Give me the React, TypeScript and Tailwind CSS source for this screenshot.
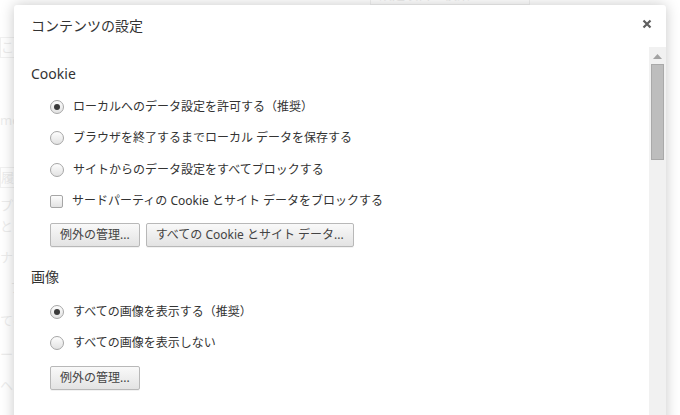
import React from "react";

const font = { fontFamily: '"Noto Sans", "Noto Sans CJK JP", sans-serif' };

const Radio = ({ checked }: { checked?: boolean }) => (
  <span className="flex h-[14px] w-[14px] shrink-0 items-center justify-center rounded-full border border-[#a6a6a6] bg-gradient-to-b from-[#fdfdfd] to-[#e2e2e2]">
    {checked && <span className="h-[6px] w-[6px] rounded-full bg-[#3a3a3a]" />}
  </span>
);

const Checkbox = () => (
  <span className="h-[13px] w-[13px] shrink-0 rounded-[2px] border border-[#a6a6a6] bg-gradient-to-b from-[#fdfdfd] to-[#e2e2e2]" />
);

const Option = ({ children, control }: { children: React.ReactNode; control: React.ReactNode }) => (
  <div className="flex h-[31.5px] items-center gap-[9px] text-[12px] text-[#333]">
    {control}
    <span className="leading-none">{children}</span>
  </div>
);

const Btn = ({ children }: { children: React.ReactNode }) => (
  <button className="h-[24px] rounded-[2px] border border-[#b8b8b8] bg-gradient-to-b from-[#f9f9f9] to-[#e3e3e3] px-[9px] text-[12px] leading-none text-[#444] shadow-[0_1px_0_rgba(0,0,0,0.05)]">
    {children}
  </button>
);

const BgPage = () => (
  <div className="flex h-full flex-col text-[13px] text-[#cfcfcf]">
    <div className="flex h-[5px] overflow-hidden">
      <div className="ml-[370px] h-[22px] w-[160px] -translate-y-[17px] border border-[#ddd] px-[8px] leading-[20px]">設定項目を検索</div>
    </div>
    <div className="mt-[32px] h-[21px] w-[40px] border border-[#ddd] leading-[19px]">この</div>
    <div className="mt-[52px] leading-[20px]">me</div>
    <div className="mt-[37px] h-[21px] w-[40px] border border-[#ddd] leading-[19px]">履歴</div>
    <div className="mt-[7px] leading-[20px]">プ</div>
    <div className="mt-[1px] leading-[20px]">とモ</div>
    <div className="mt-[11px] leading-[20px]">ナビ</div>
    <div className="mt-[10px] pl-[10px] leading-[20px]">フ</div>
    <div className="mt-[13px] leading-[20px]">てへ</div>
    <div className="mt-[14px] leading-[20px]">ート</div>
    <div className="mt-[11px] leading-[20px]">ヘワ</div>
  </div>
);

export default function App() {
  return (
    <div className="relative h-[415px] w-[680px] overflow-hidden bg-white" style={font}>
      <BgPage />
      <div className="absolute inset-0 bg-white/60" />
      <div className="absolute left-[14px] top-[5px] flex h-[430px] w-[652px] flex-col rounded-[3px] bg-white shadow-[0_0_14px_rgba(0,0,0,0.22)]">
        <div className="flex h-[42px] items-start justify-between pl-[17px] pr-[10px] pt-[10px]">
          <h1 className="text-[14px] leading-[22px] text-[#333]">コンテンツの設定</h1>
          <svg width="10" height="10" viewBox="0 0 10 10" className="mt-[4px] mr-[4px]">
            <path d="M1.5 1.5 L8.5 8.5 M8.5 1.5 L1.5 8.5" stroke="#5f5f5f" strokeWidth="2.2" />
          </svg>
        </div>
        <div className="flex flex-1">
          <div className="flex-1 pl-[17px] pt-[17px]">
            <h2 className="text-[14px] leading-[20px] text-[#333]">Cookie</h2>
            <div className="mt-[7px] pl-[19px]">
              <Option control={<Radio checked />}>ローカルへのデータ設定を許可する（推奨）</Option>
              <Option control={<Radio />}>ブラウザを終了するまでローカル データを保存する</Option>
              <Option control={<Radio />}>サイトからのデータ設定をすべてブロックする</Option>
              <Option control={<Checkbox />}>サードパーティの Cookie とサイト データをブロックする</Option>
              <div className="mt-[6px] flex gap-[6px]">
                <Btn>例外の管理...</Btn>
                <Btn>すべての Cookie とサイト データ...</Btn>
              </div>
            </div>
            <h2 className="mt-[20px] text-[14px] leading-[20px] text-[#333]">画像</h2>
            <div className="mt-[9px] pl-[19px]">
              <Option control={<Radio checked />}>すべての画像を表示する（推奨）</Option>
              <Option control={<Radio />}>すべての画像を表示しない</Option>
              <div className="mt-[7px] flex">
                <Btn>例外の管理...</Btn>
              </div>
            </div>
          </div>
          <div className="flex w-[17px] flex-col items-center bg-[#f1f1f1] pt-[7px]">
            <svg width="9" height="5" viewBox="0 0 9 5">
              <path d="M0 5 L4.5 0 L9 5 Z" fill="#a3a3a3" />
            </svg>
            <div className="mt-[5px] h-[96px] w-[13px] border border-[#a9a9a9] bg-[#bdbdbd]" />
          </div>
        </div>
      </div>
    </div>
  );
}
